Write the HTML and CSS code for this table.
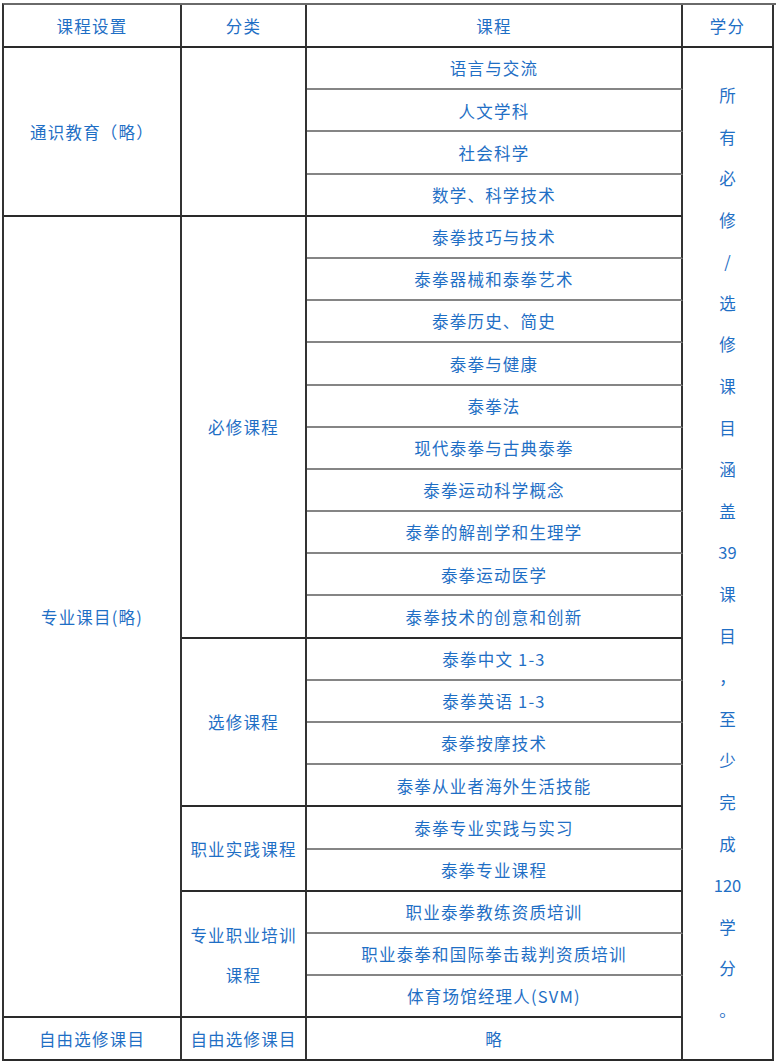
FILE: index.html
```html
<!DOCTYPE html>
<html lang="zh">
<head>
<meta charset="utf-8">
<link rel="stylesheet" href="styles.css">
</head>
<body>
<div class="table">
  <div class="cell head">课程设置</div>
  <div class="cell head">分类</div>
  <div class="cell head">课程</div>
  <div class="cell head">学分</div>

  <div class="cell group span4">通识教育（略）</div>
  <div class="cell group span4"></div>
  <div class="cell course">语言与交流</div>
  <div class="cell credit">
    <span>所</span><span>有</span><span>必</span><span>修</span><span>/</span><span>选</span><span>修</span><span>课</span><span>目</span><span>涵</span><span>盖</span><span>39</span><span>课</span><span>目</span><span>，</span><span>至</span><span>少</span><span>完</span><span>成</span><span>120</span><span>学</span><span>分</span><span>。</span>
  </div>
  <div class="cell course">人文学科</div>
  <div class="cell course">社会科学</div>
  <div class="cell course last">数学、科学技术</div>

  <div class="cell group span19">专业课目(略)</div>
  <div class="cell group span10">必修课程</div>
  <div class="cell course">泰拳技巧与技术</div>
  <div class="cell course">泰拳器械和泰拳艺术</div>
  <div class="cell course">泰拳历史、简史</div>
  <div class="cell course">泰拳与健康</div>
  <div class="cell course">泰拳法</div>
  <div class="cell course">现代泰拳与古典泰拳</div>
  <div class="cell course">泰拳运动科学概念</div>
  <div class="cell course">泰拳的解剖学和生理学</div>
  <div class="cell course">泰拳运动医学</div>
  <div class="cell course last">泰拳技术的创意和创新</div>

  <div class="cell group span4">选修课程</div>
  <div class="cell course">泰拳中文 1-3</div>
  <div class="cell course">泰拳英语 1-3</div>
  <div class="cell course">泰拳按摩技术</div>
  <div class="cell course last">泰拳从业者海外生活技能</div>

  <div class="cell group span2">职业实践课程</div>
  <div class="cell course">泰拳专业实践与实习</div>
  <div class="cell course last">泰拳专业课程</div>

  <div class="cell group span3 twoline">专业职业培训<br>课程</div>
  <div class="cell course">职业泰拳教练资质培训</div>
  <div class="cell course">职业泰拳和国际拳击裁判资质培训</div>
  <div class="cell course last">体育场馆经理人(SVM)</div>

  <div class="cell group">自由选修课目</div>
  <div class="cell group">自由选修课目</div>
  <div class="cell course last">略</div>
</div>
</body>
</html>
```

FILE: styles.css
```css
html, body {
  margin: 0;
  padding: 0;
  background: #ffffff;
}

body {
  font-family: "Noto Sans CJK SC", "Noto Sans", sans-serif;
  color: #1f6fc5;
}

.table {
  margin: 3px 0 0 2px;
  width: 772px;
  display: grid;
  grid-template-columns: 178px 125px 376px 91px;
  grid-template-rows: 43px repeat(24, 42.2px);
  border-top: 2px solid #6a6a6a;
  border-left: 2px solid #333333;
  box-sizing: content-box;
}

.cell {
  box-sizing: border-box;
  border-right: 2px solid #333333;
  border-bottom: 2px solid #2a2a2a;
  display: flex;
  align-items: center;
  justify-content: center;
  text-align: center;
  font-size: 16.5px;
  letter-spacing: 1.2px;
  line-height: 1;
  padding-top: 1px;
}

.course {
  border-bottom-color: #858585;
}

.course.last {
  border-bottom-color: #2a2a2a;
}

.span2 { grid-row: span 2; }
.span3 { grid-row: span 3; }
.span4 { grid-row: span 4; }
.span10 { grid-row: span 10; }
.span19 { grid-row: span 19; }

.twoline {
  line-height: 40px;
}

.credit {
  grid-row: span 24;
  flex-direction: column;
  letter-spacing: 0;
  padding-top: 0;
}

.credit span {
  display: block;
  line-height: 41.6px;
  height: 41.6px;
}
```
